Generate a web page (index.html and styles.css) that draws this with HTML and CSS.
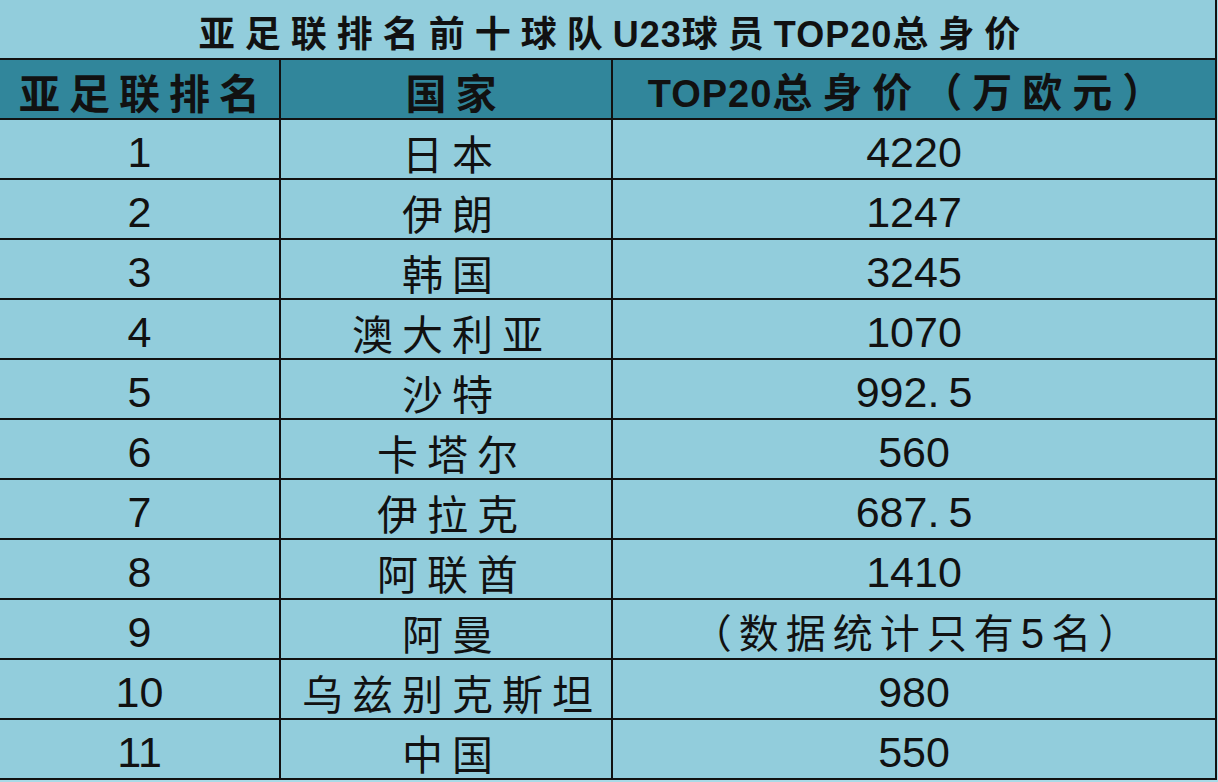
FILE: index.html
```html
<!DOCTYPE html>
<html lang="zh-CN">
<head>
<meta charset="utf-8">
<title>亚足联排名前十球队U23球员TOP20总身价</title>
<link rel="stylesheet" href="styles.css">
</head>
<body>
<table class="sheet">
  <colgroup><col class="c1"><col class="c2"><col class="c3"></colgroup>
  <tr class="title-row">
    <td colspan="3" class="title">亚足联排名前十球队<span class="lat">U23</span>球员<span class="lat">TOP20</span>总身价</td>
  </tr>
  <tr class="head">
    <th class="h1">亚足联排名</th>
    <th class="h2">国家</th>
    <th class="h3"><span class="lat">TOP20</span>总身价（万欧元）</th>
  </tr>
  <tr><td class="num">1</td><td class="cn">日本</td><td class="val">4220</td></tr>
  <tr><td class="num">2</td><td class="cn">伊朗</td><td class="val">1247</td></tr>
  <tr><td class="num">3</td><td class="cn">韩国</td><td class="val">3245</td></tr>
  <tr><td class="num">4</td><td class="cn">澳大利亚</td><td class="val">1070</td></tr>
  <tr><td class="num">5</td><td class="cn">沙特</td><td class="val">992<span class="dot">.</span>5</td></tr>
  <tr><td class="num">6</td><td class="cn">卡塔尔</td><td class="val">560</td></tr>
  <tr><td class="num">7</td><td class="cn">伊拉克</td><td class="val">687<span class="dot">.</span>5</td></tr>
  <tr><td class="num">8</td><td class="cn">阿联酋</td><td class="val">1410</td></tr>
  <tr><td class="num">9</td><td class="cn">阿曼</td><td class="note">（数据统计只有<span class="d">5</span>名）</td></tr>
  <tr><td class="num">10</td><td class="cn">乌兹别克斯坦</td><td class="val">980</td></tr>
  <tr><td class="num">11</td><td class="cn">中国</td><td class="val">550</td></tr>
</table>
</body>
</html>
```

FILE: styles.css
```css
html, body {
  margin: 0;
  padding: 0;
  background: #a9dae7;
}

body {
  width: 1218px;
  height: 782px;
  overflow: hidden;
}

.sheet {
  border-collapse: collapse;
  table-layout: fixed;
  width: 1216px;
  background: #92cddc;
  color: #111;
  font-family: "Noto Sans CJK SC", "Liberation Sans", sans-serif;
}

.c1 { width: 280px; }
.c2 { width: 332px; }
.c3 { width: 604px; }

.sheet td, .sheet th {
  border: 2px solid #111;
  padding: 4px 0 0 0;
  height: 54px;
  text-align: center;
  vertical-align: middle;
  line-height: 1;
  white-space: nowrap;
}

.sheet tr > :first-child { border-left: none; }

.title-row .title {
  border-top: none;
  font-size: 36px;
  font-weight: 700;
  letter-spacing: 10px;
  padding-left: 14px;
  padding-top: 7px;
  height: 51px;
}

.lat {
  font-family: "Liberation Sans", sans-serif;
  font-weight: 700;
  letter-spacing: 1px;
}

.title .lat { font-size: 36px; }

.head th {
  background: #31869b;
  font-weight: 700;
}

.h1 {
  font-size: 41px;
  letter-spacing: 9px;
  padding-left: 9px !important;
}

.h2 {
  font-size: 41px;
  letter-spacing: 9px;
  padding-left: 19px !important;
}

.h3 {
  font-size: 40px;
  letter-spacing: 10px;
  padding-right: 8px !important;
}

.h3 .lat {
  font-size: 38px;
  letter-spacing: 1px;
}

.num, .val {
  font-family: "Liberation Sans", sans-serif;
  font-size: 43px;
  padding-top: 7px !important;
  height: 51px !important;
}

.dot { letter-spacing: 9px; }

.cn {
  font-size: 41px;
  letter-spacing: 9px;
  padding-left: 12px !important;
  padding-top: 6px !important;
  height: 52px !important;
}

.note {
  font-family: "Noto Sans CJK SC", sans-serif;
  font-size: 40px;
  letter-spacing: 7px;
  padding-left: 9px !important;
  padding-top: 7px !important;
  height: 51px !important;
}

.note .d {
  font-family: "Liberation Sans", sans-serif;
  font-size: 42px;
}
```
